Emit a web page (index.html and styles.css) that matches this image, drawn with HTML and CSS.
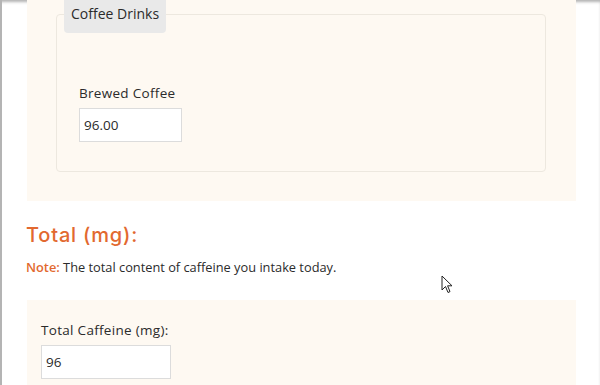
FILE: index.html
```html
<!DOCTYPE html>
<html>
<head>
  <title>Caffeine Calculator</title>
  <meta name="viewport" content="width=device-width, initial-scale=1.0">
  <link rel="stylesheet" href="styles.css">
</head>
<body>
  <div class="page">
    <!-- Drinks panel -->
    <div class="panel drinks">
      <fieldset class="group">
        <legend>Coffee Drinks</legend>
        <label class="field-label" for="brewed">Brewed Coffee</label>
        <input class="field small" id="brewed" type="text" value="96.00">
      </fieldset>
    </div>

    <!-- Totals -->
    <h2 class="total-title">Total (mg):</h2>
    <p class="note"><span class="note-tag">Note:</span> The total content of caffeine you intake today.</p>

    <div class="panel totals">
      <label class="field-label" for="total">Total Caffeine (mg):</label>
      <input class="field wide" id="total" type="text" value="96">
    </div>
  </div>

  <svg class="cursor" width="12" height="19" viewBox="0 0 12 19">
    <path d="M1 1 L1 15 L4.5 11.5 L7 17.5 L9 16.6 L6.6 10.8 L11 10.8 Z" fill="#fff" stroke="#222" stroke-width="1"/>
  </svg>
</body>
</html>
```

FILE: styles.css
```css
body {
  margin: 0;
  font-family: "Open Sans", Arial, sans-serif;
  color: #2b2b2b;
  background: #fff;
  overflow: hidden;
  height: 385px;
  box-shadow: inset 0 3px 3px -1px rgba(0,0,0,0.3);
}
.page {
  border-left: 2px solid #b4b4b4;
  padding-left: 25px;
  width: 549px;
  min-height: 385px;
}
.panel {
  background: #fef9f2;
}
.drinks {
  padding: 0 30px 29px 29px;
}
.group {
  margin: -5px 0 0 0;
  border: 1px solid #ede8df;
  border-radius: 4px;
  padding: 50px 22px 29px 22px;
}
.group legend {
  background: #e9e9e9;
  border-radius: 4px;
  padding: 10px 7px;
  margin-left: -15px;
  font-size: 14px;
  line-height: 18px;
}
.field-label {
  display: block;
  font-size: 13.5px;
  line-height: 20px;
  letter-spacing: 0.3px;
  margin-bottom: 5px;
}
.field {
  display: block;
  box-sizing: border-box;
  height: 34px;
  border: 1px solid #dcdcdc;
  background: #fff;
  font-family: inherit;
  font-size: 13.5px;
  color: #2b2b2b;
  padding: 0 4px;
  margin: 0;
}
.field.small {
  width: 103px;
}
.field.wide {
  width: 130px;
}
.total-title {
  margin: 0;
  padding-top: 22px;
  margin-left: -1px;
  font-family: Inter, "Open Sans", sans-serif;
  font-size: 20px;
  font-weight: 500;
  letter-spacing: 0.8px;
  color: #e2692f;
  line-height: 24px;
}
.note {
  margin: 11px 0 0 -1px;
  font-size: 12.8px;
  line-height: 18px;
}
.note-tag {
  color: #e2692f;
  font-weight: 600;
}
.totals {
  margin-top: 24px;
  padding: 20px 14px 40px 14px;
}
.cursor {
  position: absolute;
  left: 441px;
  top: 275px;
}
```
